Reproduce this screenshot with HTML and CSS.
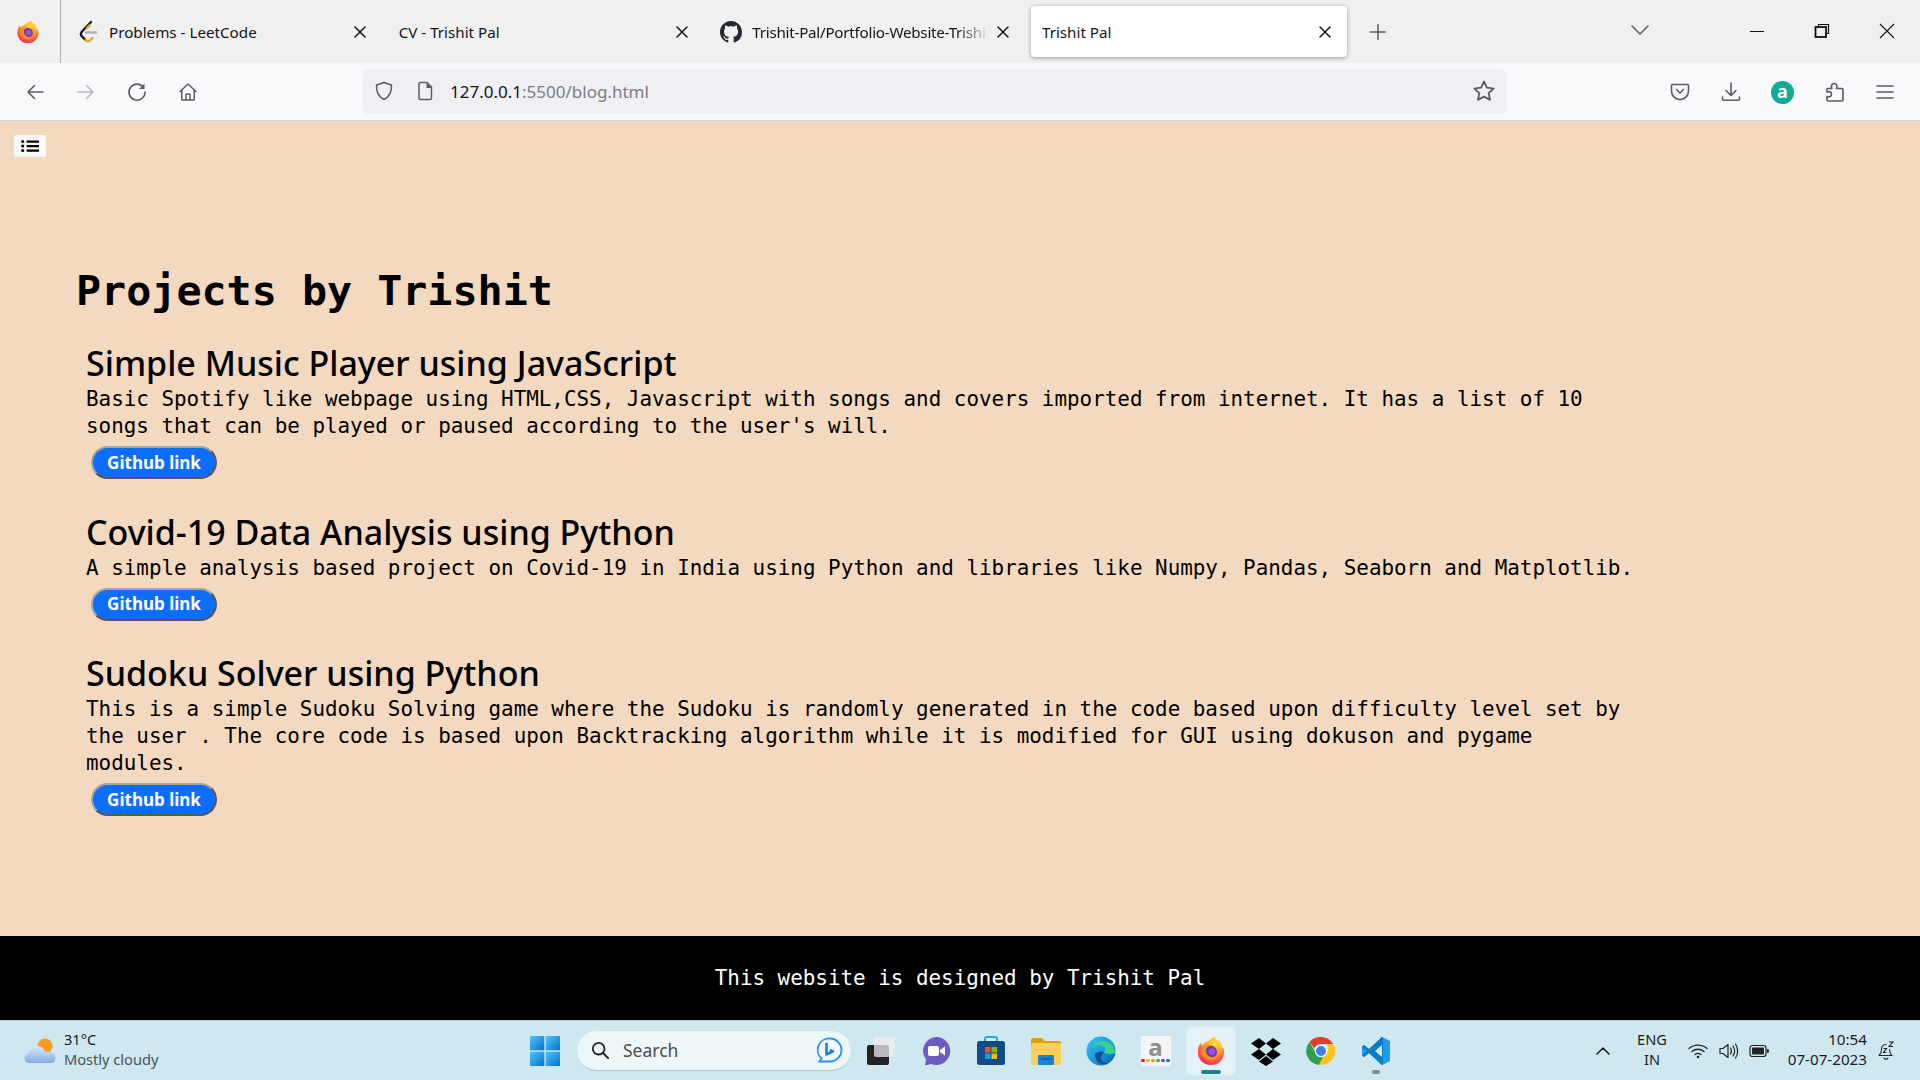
FILE: index.html
```html
<!DOCTYPE html>
<html lang="en">
<head>
<meta charset="utf-8">
<title>Trishit Pal</title>
<link rel="stylesheet" href="styles.css">
</head>
<body>
<svg class="defs" width="0" height="0">
  <defs>
    <radialGradient id="ffBody" cx="0.6" cy="0.25" r="0.9">
      <stop offset="0" stop-color="#ffde3d"/><stop offset="0.4" stop-color="#ff9a26"/><stop offset="0.8" stop-color="#f5384f"/><stop offset="1" stop-color="#e31587"/>
    </radialGradient>
    <linearGradient id="edgeG" x1="0" y1="0" x2="1" y2="1">
      <stop offset="0" stop-color="#35c1f1"/><stop offset="0.5" stop-color="#1b9de2"/><stop offset="1" stop-color="#0c59a4"/>
    </linearGradient>
    <linearGradient id="winG" x1="0" y1="0" x2="1" y2="1">
      <stop offset="0" stop-color="#4fc6f8"/><stop offset="1" stop-color="#0473d0"/>
    </linearGradient>
    <linearGradient id="cloudG" x1="0" y1="0" x2="0" y2="1">
      <stop offset="0" stop-color="#dce9fa"/><stop offset="1" stop-color="#86ade3"/>
    </linearGradient>
    <symbol id="firefox" viewBox="0 0 32 32">
      <path fill="url(#ffBody)" d="M16 31C7.5 31 2 24.500 2 17c0-4 1.300-7.500 3-9.500L6.500 10C8 7.500 10.500 6 13 5.500 15 3.500 18 2 20 1c-.5 2 0 4 2.500 5.500C27 9 30 12.500 30 17c0 8-6 14-14 14z"/>
      <path fill="#ffd23c" d="M20 1c-1 3-1 5 2 7 3 2 5 5 5 8 2-3 1-8-2-11-2 0-4-2-5-4z"/>
      <circle cx="16" cy="17" r="6.500" fill="#6e3bb8"/>
      <circle cx="17" cy="16.500" r="3.500" fill="#a44fd0"/>
      <path fill="#ff8a1f" d="M7 13c2-3 6-4 9-3-3 0-5 2-5.500 4-.5 3 1 7 5.500 8.500 3 .8 6-.5 7.500-3-1 4-5 6.500-9 6-5-.5-9-4-9-9 0-1.500.5-2.800 1.500-3.500z"/>
    </symbol>
    <symbol id="close" viewBox="0 0 16 16"><path d="M3 3l10 10M13 3L3 13" fill="none" stroke="#15141a" stroke-width="1.500" stroke-linecap="round"/></symbol>
  </defs>
</svg>

<div class="window">
  <header class="tabbar">
    <div class="ff-slot"><svg class="i20"><use href="#firefox"/></svg></div>
    <div class="tabs">
      <div class="tab">
        <svg class="fav" viewBox="0 0 20 24"><path d="M13 2L4 11.500c-1.500 1.500-1.500 3.500 0 5l3.500 3.500" fill="none" stroke="#1a1a1a" stroke-width="2.400" stroke-linecap="round"/><path d="M7.500 20c1.500 1.500 3.500 1.500 5 0l2-2M9 8l2.500-2.500" fill="none" stroke="#f8a01c" stroke-width="2.400" stroke-linecap="round"/><path d="M8 12.500h10" stroke="#b3b3b3" stroke-width="2.400" stroke-linecap="round"/></svg>
        <span class="tab-title">Problems - LeetCode</span>
        <svg class="tab-x"><use href="#close"/></svg>
      </div>
      <div class="tab">
        <span class="tab-title tab-title-nofav">CV - Trishit Pal</span>
        <svg class="tab-x"><use href="#close"/></svg>
      </div>
      <div class="tab">
        <svg class="fav" viewBox="0 0 16 16"><path fill="#24292f" d="M8 0C3.580 0 0 3.580 0 8c0 3.540 2.290 6.530 5.470 7.590.4.070.55-.17.55-.38 0-.19-.01-.82-.01-1.490-2.010.37-2.530-.49-2.690-.94-.09-.23-.48-.94-.82-1.130-.28-.15-.68-.52-.01-.53.63-.01 1.080.58 1.230.82.720 1.210 1.870.87 2.330.66.070-.52.280-.87.510-1.070-1.780-.2-3.640-.89-3.640-3.950 0-.87.310-1.590.820-2.150-.08-.2-.36-1.020.08-2.120 0 0 .67-.21 2.200.820.640-.18 1.320-.27 2-.27s1.360.09 2 .27c1.530-1.040 2.200-.82 2.200-.82.440 1.100.160 1.920.080 2.120.510.560.820 1.270.820 2.150 0 3.070-1.870 3.750-3.650 3.950.290.250.540.730.540 1.480 0 1.070-.01 1.930-.01 2.200 0 .21.150.460.550.380A8.010 8.010 0 0 0 16 8c0-4.420-3.580-8-8-8z"/></svg>
        <span class="tab-title tab-title-fade">Trishit-Pal/Portfolio-Website-Trishi</span>
        <svg class="tab-x"><use href="#close"/></svg>
      </div>
      <div class="tab tab-active">
        <span class="tab-title tab-title-nofav">Trishit Pal</span>
        <svg class="tab-x"><use href="#close"/></svg>
      </div>
    </div>
    <svg class="newtab" viewBox="0 0 18 18"><path d="M9 1.500v15M1.500 9h15" stroke="#5b5b66" stroke-width="1.500" stroke-linecap="round"/></svg>
    <svg class="tablist" viewBox="0 0 18 10"><path d="M1 1l8 8 8-8" fill="none" stroke="#5b5b66" stroke-width="1.500" stroke-linecap="round" stroke-linejoin="round"/></svg>
    <div class="winctl">
      <svg class="ctl" viewBox="0 0 16 16"><path d="M1 8.500h14" stroke="#111" stroke-width="1"/></svg>
      <svg class="ctl" viewBox="0 0 16 16"><path d="M4.500 4V1.500h10v9H12" fill="none" stroke="#111" stroke-width="1.200"/><rect x="1.500" y="4" width="10.500" height="10" fill="none" stroke="#111" stroke-width="1.800"/></svg>
      <svg class="ctl" viewBox="0 0 16 16"><path d="M1 1l14 14M15 1L1 15" stroke="#111" stroke-width="1.100"/></svg>
    </div>
  </header>

  <nav class="navbar">
    <div class="nav-left">
      <svg class="nav-i" viewBox="0 0 20 20"><path d="M18 10H3M9.500 3.500L3 10l6.500 6.500" fill="none" stroke="#5b5b66" stroke-width="1.600" stroke-linecap="round" stroke-linejoin="round"/></svg>
      <svg class="nav-i" viewBox="0 0 20 20"><path d="M2 10h15M10.500 3.500L17 10l-6.500 6.500" fill="none" stroke="#b9b9bf" stroke-width="1.600" stroke-linecap="round" stroke-linejoin="round"/></svg>
      <svg class="nav-i" viewBox="0 0 20 20"><path d="M16.500 5.500A8 8 0 1 0 18 10" fill="none" stroke="#5b5b66" stroke-width="1.600" stroke-linecap="round"/><path d="M17.500 1.500v5.500H12z" fill="#5b5b66"/></svg>
      <svg class="nav-i" viewBox="0 0 20 20"><path d="M2 9.500L10 2l8 7.500M3.800 8v9.200c0 .5.300.8.800.8h10.800c.5 0 .8-.3.800-.8V8M8 18v-5c0-.6.400-1 1-1h2c.6 0 1 .4 1 1v5" fill="none" stroke="#5b5b66" stroke-width="1.500" stroke-linecap="round" stroke-linejoin="round"/></svg>
    </div>
    <div class="urlbar">
      <svg class="url-i" viewBox="0 0 20 20"><path d="M10 1.500l7.500 2.500c.3 6.500-1.500 11.500-7.500 14.500C4 15.500 2.200 10.500 2.500 4z" fill="none" stroke="#5b5b66" stroke-width="1.500" stroke-linejoin="round"/></svg>
      <svg class="url-i url-doc" viewBox="0 0 20 20"><path d="M4 3c0-.8.600-1.500 1.500-1.500H12L16.500 6v11c0 .8-.6 1.500-1.500 1.500H5.500C4.600 18.500 4 17.800 4 17z" fill="none" stroke="#5b5b66" stroke-width="1.500" stroke-linejoin="round"/><path d="M11.500 1.500V7h5z" fill="#5b5b66"/></svg>
      <span class="url-text">127.0.0.1<span class="url-dim">:5500/blog.html</span></span>
      <svg class="url-i url-star" viewBox="0 0 24 24"><path d="M12 2.500l2.900 6.200 6.700.9-4.900 4.600 1.300 6.700-6-3.300-6 3.300 1.300-6.700-4.900-4.600 6.700-.9z" fill="none" stroke="#5b5b66" stroke-width="1.800" stroke-linejoin="round"/></svg>
    </div>
    <div class="nav-right">
      <svg class="nav-i" viewBox="0 0 20 20"><path d="M2.500 2.500h15c.6 0 1 .4 1 1V9c0 5-4 8.500-8.500 8.500S1.500 14 1.500 9V3.500c0-.6.400-1 1-1z" fill="none" stroke="#5b5b66" stroke-width="1.600"/><path d="M6.500 7.500L10 11l3.500-3.500" fill="none" stroke="#5b5b66" stroke-width="1.600" stroke-linecap="round" stroke-linejoin="round"/></svg>
      <svg class="nav-i" viewBox="0 0 20 20"><path d="M10 1v12M5 8.500l5 5 5-5M1.500 15v2c0 .8.500 1.200 1.200 1.200h14.600c.7 0 1.200-.4 1.200-1.200v-2" fill="none" stroke="#5b5b66" stroke-width="1.600" stroke-linecap="round" stroke-linejoin="round"/></svg>
      <span class="ext-a">a</span>
      <svg class="nav-i" viewBox="0 0 20 20"><path d="M2.500 6.500H7c-1.500-3 0-5 2.200-5S12.800 3.500 11.500 6.500H17c.6 0 1 .4 1 1V18c0 .6-.4 1-1 1H3c-.6 0-1-.4-1-1v-3.500c3 1 4.500-.5 4.500-2.300S5 9 2 10V7z" fill="none" stroke="#5b5b66" stroke-width="1.600" stroke-linejoin="round"/></svg>
      <svg class="nav-i" viewBox="0 0 20 20"><path d="M2 4h16M2 10h16M2 16h16" stroke="#5b5b66" stroke-width="1.600" stroke-linecap="round"/></svg>
    </div>
  </nav>

  <main class="page">
    <div class="page-body">
      <button class="menu-btn" type="button" aria-label="menu">
        <svg class="menu-i" viewBox="0 0 16 12"><path d="M5 2h11M5 6h11M5 10h11" stroke="#000" stroke-width="2"/><circle cx="1.500" cy="2" r="1.400"/><circle cx="1.500" cy="6" r="1.400"/><circle cx="1.500" cy="10" r="1.400"/></svg>
      </button>
      <section class="projects">
        <h1>Projects by Trishit</h1>
        <article class="project">
          <h2>Simple Music Player using JavaScript</h2>
          <p>Basic Spotify like webpage using HTML,CSS, Javascript with songs and covers imported from internet. It has a list of 10 songs that can be played or paused according to the user's will.</p>
          <button class="gh-btn" type="button">Github link</button>
        </article>
        <article class="project">
          <h2>Covid-19 Data Analysis using Python</h2>
          <p>A simple analysis based project on Covid-19 in India using Python and libraries like Numpy, Pandas, Seaborn and Matplotlib.</p>
          <button class="gh-btn" type="button">Github link</button>
        </article>
        <article class="project">
          <h2>Sudoku Solver using Python</h2>
          <p>This is a simple Sudoku Solving game where the Sudoku is randomly generated in the code based upon difficulty level set by the user . The core code is based upon Backtracking algorithm while it is modified for GUI using dokuson and pygame modules.</p>
          <button class="gh-btn" type="button">Github link</button>
        </article>
      </section>
    </div>
    <footer class="site-footer">This website is designed by Trishit Pal</footer>
  </main>

  <div class="taskbar">
    <div class="weather">
      <svg class="weather-i" viewBox="0 0 32 28"><circle cx="21" cy="9" r="7.500" fill="#f79a1e"/><path d="M6 26c-3.500 0-5.500-2-5.500-5 0-2.500 2-4.600 4.500-5C6 12 9.500 9 13 9c4 0 7 2.500 8 6 1-.5 2-.5 3-.3 4 .3 7.500 2.500 7.500 6.500 0 3-2 4.800-5 4.800z" fill="url(#cloudG)"/></svg>
      <div class="weather-text"><span class="w-temp">31°C</span><span class="w-desc">Mostly cloudy</span></div>
    </div>
    <div class="task-center">
      <svg class="win" viewBox="0 0 30 30"><rect x="0" y="0" width="14.300" height="14.300" fill="url(#winG)"/><rect x="15.700" y="0" width="14.300" height="14.300" fill="url(#winG)"/><rect x="0" y="15.700" width="14.300" height="14.300" fill="url(#winG)"/><rect x="15.700" y="15.700" width="14.300" height="14.300" fill="url(#winG)"/></svg>
      <div class="search">
        <svg class="search-i" viewBox="0 0 20 20"><circle cx="8.500" cy="8.500" r="6.500" fill="none" stroke="#1f1f1f" stroke-width="2"/><path d="M13.500 13.500L19 19" stroke="#1f1f1f" stroke-width="2.200" stroke-linecap="round"/></svg>
        <span class="search-t">Search</span>
        <svg class="bing" viewBox="0 0 26 26"><path d="M13 1.500a11.500 11.500 0 0 1 0 23H2.500l2-3A11.500 11.500 0 0 1 13 1.500z" fill="#f1f8fb" stroke="#2a8fe8" stroke-width="1.800"/><path d="M9.500 6v11.500l6.500-3.200-3-1.500" fill="none" stroke="#1f7fe0" stroke-width="2.600" stroke-linejoin="round"/></svg>
      </div>
      <div class="apps">
        <div class="app"><svg class="app-i" viewBox="0 0 30 30"><rect x="1" y="9" width="22" height="20" rx="2" fill="#222"/><rect x="8" y="1" width="21" height="20" rx="2" fill="#eeeeee" fill-opacity=".75"/></svg></div>
        <div class="app"><svg class="app-i" viewBox="0 0 30 30"><path d="M15 1a14 14 0 1 1-5 27l-6 1.500 1-6A14 14 0 0 1 15 1z" fill="#6b5cc4"/><rect x="7" y="10" width="11" height="10" rx="2" fill="#fff"/><path d="M19 14l5-3.500v9L19 16z" fill="#fff"/></svg></div>
        <div class="app"><svg class="app-i" viewBox="0 0 30 30"><path d="M9 6V3c0-1 .8-2 2-2h8c1.200 0 2 1 2 2v3" fill="none" stroke="#2aa8e8" stroke-width="2"/><rect x="1" y="5" width="28" height="24" rx="2.500" fill="#144b86"/><rect x="9" y="11" width="5.500" height="5.500" fill="#f25022"/><rect x="15.500" y="11" width="5.500" height="5.500" fill="#7fba00"/><rect x="9" y="17.500" width="5.500" height="5.500" fill="#00a4ef"/><rect x="15.500" y="17.500" width="5.500" height="5.500" fill="#ffb900"/></svg></div>
        <div class="app"><svg class="app-i" viewBox="0 0 30 30"><path d="M0 4c0-1 .8-2 2-2h9l3 3h14c1 0 2 1 2 2v3H0z" fill="#d8a106"/><rect x="0" y="7" width="30" height="22" rx="1.500" fill="#fcd058"/><rect x="7" y="19" width="16" height="10" rx="1" fill="#1585d8"/><rect x="10" y="22" width="10" height="1.800" fill="#0b5fa6"/></svg></div>
        <div class="app"><svg class="app-i" viewBox="0 0 30 30"><circle cx="15" cy="15" r="14.500" fill="url(#edgeG)"/><path d="M29 17c0-8-6-12-12-12C11 5 7 8 6 12c2-3 6-4 9-3 3 1 4 3 4 5 0 1-.5 2-1 2.500 3 2 8 2 11 .5z" fill="#38d28c"/><path d="M9 19c0 5 4 9 9 9 2 0 3-.3 4-1-4 .5-7-2-7-5 0-3 2-4 3-5.500-2-2-9-1-9 2.500z" fill="#0c4f96"/></svg></div>
        <div class="app"><div class="amz"><span class="amz-a">a</span><div class="amz-dots"><i class="dot d1"></i><i class="dot d2"></i><i class="dot d3"></i><i class="dot d4"></i><i class="dot d5"></i><i class="dot d6"></i></div></div></div>
        <div class="app app-active"><svg class="app-i"><use href="#firefox"/></svg><i class="run-on"></i></div>
        <div class="app"><svg class="app-i" viewBox="0 0 30 30"><path d="M8 2L0 7.500 8 13l7-5.500zM22 2l-7 5.500 7 5.500 8-5.500zM0 18.500L8 24l7-5.500L8 13zM22 13l-7 5.500L22 24l8-5.500zM8 25.500L15 30l7-4.500-7-5.500z" fill="#000"/></svg></div>
        <div class="app"><svg class="app-i" viewBox="0 0 30 30"><path d="M15 1a14 14 0 0 1 12.100 7H15a7 7 0 0 0-6.600 4.600L3.500 6A14 14 0 0 1 15 1z" fill="#e33b2e"/><path d="M3.500 6l6 10.500a7 7 0 0 0 8.500 3.200L13 28.900A14 14 0 0 1 3.500 6z" fill="#2fa04c"/><path d="M27.100 8A14 14 0 0 1 13 28.900l6-10.300A7 7 0 0 0 20.500 8z" fill="#fcc41c"/><circle cx="15" cy="15" r="6.200" fill="#fff"/><circle cx="15" cy="15" r="5" fill="#3f7de8"/></svg></div>
        <div class="app"><svg class="app-i" viewBox="0 0 30 30"><path d="M21 1l8 4v20l-8 4-13-12-5 4-2-1.500V10.500L3 9l5 4zM21 9l-7 6 7 6z" fill="#1f9cf0" fill-rule="evenodd"/><path d="M21 1L8 13 3 9 1 10.500 6 15l-5 4.500L3 21l5-4L21 29l1-.5V1.500z" fill="#0a7cc4"/><path d="M21 9l-7 6 7 6z" fill="#cfe7ee"/></svg><i class="run-off"></i></div>
      </div>
    </div>
    <div class="tray">
      <svg class="t-chev" viewBox="0 0 14 8"><path d="M1 7l6-6 6 6" fill="none" stroke="#1a1a1a" stroke-width="1.500" stroke-linecap="round" stroke-linejoin="round"/></svg>
      <div class="lang"><span>ENG</span><span>IN</span></div>
      <svg class="t-i t-wifi" viewBox="0 0 20 16"><path d="M1 5.500c5-4.500 13-4.500 18 0M4 8.500c3.500-3 8.500-3 12 0M7 11.500c1.800-1.400 4.200-1.400 6 0" fill="none" stroke="#222" stroke-width="1.300" stroke-linecap="round"/><circle cx="10" cy="14" r="1.300" fill="#222"/></svg>
      <svg class="t-i t-vol" viewBox="0 0 20 16"><path d="M1 5.500h3L9 1.500v13l-5-4H1z" fill="none" stroke="#222" stroke-width="1.200" stroke-linejoin="round"/><path d="M11.500 5c1.200 1.800 1.200 4.200 0 6M14 3c2 3 2 7 0 10M16.500 1c2.800 4 2.800 10 0 14" fill="none" stroke="#222" stroke-width="1.200" stroke-linecap="round"/></svg>
      <svg class="t-i t-bat" viewBox="0 0 20 14"><rect x="1" y="1.500" width="16" height="11" rx="2.500" fill="none" stroke="#222" stroke-width="1.200"/><rect x="3" y="3.500" width="12" height="7" rx="1" fill="#222"/><rect x="18" y="5" width="1.800" height="4" rx="1" fill="#222"/></svg>
      <div class="clock"><span>10:54</span><span>07-07-2023</span></div>
      <svg class="t-i t-bell" viewBox="0 0 18 20"><path d="M9 3.500c-3 0-4.500 2-4.500 5 0 3-1 4.500-2.500 6h13c-1.500-1.500-2.500-3-2.500-6M7 17c.5 1.500 3.500 1.500 4 0" fill="none" stroke="#222" stroke-width="1.100" stroke-linecap="round" stroke-linejoin="round"/><path d="M6.500 7.500h3l-3 4h3M12 1h4l-4 4.500h4" fill="none" stroke="#222" stroke-width="1.100"/></svg>
    </div>
  </div>
</div>
</body>
</html>
```

FILE: styles.css
```css
* { box-sizing: border-box; }
html, body { margin: 0; padding: 0; }
body { width: 1920px; height: 1080px; overflow: hidden; font-family: "Noto Sans", sans-serif; }
.defs { position: absolute; }
.window { display: flex; flex-direction: column; width: 1920px; height: 1080px; }
i { display: block; }

/* tab strip */
.tabbar { display: flex; align-items: center; height: 63px; flex: none; background: #f0f0f0; }
.ff-slot { display: flex; align-items: center; justify-content: center; width: 61px; height: 63px; padding-right: 4px; border-right: 1px solid #a9a9ad; flex: none; }
.i20 { width: 24px; height: 24px; }
.tabs { display: flex; gap: 5.670px; margin-left: 5px; flex: none; }
.tab { display: flex; align-items: center; width: 316px; height: 51px; padding: 0 14px 0 11px; border-radius: 4px; flex: none; }
.tab-active { background: #fff; box-shadow: 0 1px 4px rgba(0,0,0,.35); }
.fav { width: 22px; height: 24px; margin-right: 10px; flex: none; }
.tab-title { flex: 1; min-width: 0; font-size: 15.200px; color: #15141a; white-space: nowrap; overflow: hidden; }
.tab-title-fade { letter-spacing: -.25px; -webkit-mask-image: linear-gradient(90deg, #000 86%, transparent 100%); mask-image: linear-gradient(90deg, #000 86%, transparent 100%); }
.tab-x { width: 16px; height: 16px; margin-left: 5px; flex: none; }
.newtab { width: 18px; height: 18px; margin-left: 22px; flex: none; }
.tablist { width: 18px; height: 10px; margin-left: 244px; margin-bottom: 3px; flex: none; }
.winctl { display: flex; align-items: center; gap: 49px; margin-left: 100px; margin-bottom: 2px; }
.ctl { width: 16px; height: 16px; flex: none; }

/* toolbar */
.navbar { display: flex; align-items: center; height: 58px; flex: none; background: #f9f9fb; border-bottom: 1px solid #cfcfd8; padding: 0 0 1px 25px; }
.nav-i { width: 20px; height: 20px; flex: none; }
.nav-left { display: flex; align-items: center; gap: 31px; width: 337px; margin-top: 2px; flex: none; }
.urlbar { display: flex; align-items: center; width: 1144px; height: 45px; background: #f0f0f4; border-radius: 6px; padding: 0 10px 0 12px; flex: none; }
.url-i { width: 20px; height: 20px; flex: none; }
.url-doc { margin-left: 21px; }
.url-text { margin-left: 15px; flex: 1; font-size: 17px; color: #15141a; }
.url-dim { color: #7c7c84; }
.url-star { width: 24px; height: 24px; }
.nav-right { display: flex; align-items: center; gap: 30.500px; margin: 2px 0 0 164px; flex: none; }
.ext-a { display: flex; align-items: center; justify-content: center; width: 23px; height: 23px; border-radius: 50%; background: #0fab96; color: #fff; font: 700 18px/20px "Noto Sans", sans-serif; padding-bottom: 3px; flex: none; }

/* page */
.page { display: flex; flex-direction: column; flex: 1; min-height: 0; background: #f2d9bf; }
.page-body { flex: 1; padding: 14px 0 0 14px; }
.menu-btn { display: flex; align-items: center; justify-content: center; width: 32px; height: 22px; padding: 0; background: #f8f9fa; border: 0; border-radius: 2px; }
.menu-i { width: 18px; height: 14px; }
.projects { margin: 109px 0 0 62px; }
h1 { margin: 0 0 27px; font: 700 41.700px/50px "DejaVu Sans Mono", monospace; color: #000; }
.project { width: 1552px; margin: 0 0 32.500px 10px; }
h2 { margin: 0; padding-bottom: 2px; font: 500 34px/41px "Noto Sans", sans-serif; color: #000; }
p { margin: 0; font: 400 20.900px/27px "DejaVu Sans Mono", monospace; color: #000; }
.gh-btn { display: block; width: 126px; height: 33px; margin: 6px 0 0 5px; padding: 0; background: #0d6efd; color: #fff; font: 700 17px/20px "Noto Sans", sans-serif; border-width: 2px; border-style: solid; border-color: #a8a49f #5d5550 #5d5550 #a8a49f; border-radius: 17px; }
.site-footer { display: flex; align-items: center; justify-content: center; height: 84px; flex: none; background: #000; color: #fff; font: 400 20.900px/27px "DejaVu Sans Mono", monospace; }

/* taskbar */
.taskbar { display: flex; align-items: center; height: 60px; flex: none; background: #cfe7ee; border-top: 1px solid #b6c9cf; }
.weather { display: flex; align-items: center; width: 530px; padding-left: 24px; flex: none; color: #1c1c1c; }
.weather-i { width: 32px; height: 28px; margin-right: 8px; flex: none; }
.weather-text { display: flex; flex-direction: column; margin-bottom: 3px; font-size: 14.600px; line-height: 20px; }
.w-desc { color: #4a5358; }
.task-center { display: flex; align-items: center; flex: none; }
.win { width: 30px; height: 30px; flex: none; }
.search { display: flex; align-items: center; width: 274px; height: 40px; margin-left: 17px; padding: 0 8px 0 14px; background: #edf6f9; border-radius: 20px; border-bottom: 1px solid #b4c6cc; flex: none; }
.search-i { width: 18px; height: 18px; flex: none; }
.search-t { margin-left: 14px; flex: 1; font-size: 17.500px; color: #4d4d4d; }
.bing { width: 26px; height: 26px; flex: none; }
.apps { display: flex; align-items: center; gap: 7px; margin-left: 5.500px; flex: none; }
.app { position: relative; display: flex; align-items: center; justify-content: center; width: 48px; height: 48px; flex: none; }
.app-i { width: 30px; height: 30px; flex: none; }
.app-active { background: #e4f1f6; border-radius: 5px; box-shadow: 0 0 0 1px #d9e9ee; }
.run-on { position: absolute; bottom: 1px; left: 14px; width: 20px; height: 4px; border-radius: 2px; background: #1e7f96; }
.run-off { position: absolute; bottom: 1px; left: 20px; width: 8px; height: 4px; border-radius: 2px; background: #7f8a8f; }
.amz { display: flex; flex-direction: column; align-items: center; width: 30px; height: 30px; background: #f4f4f4; }
.amz-a { font: 700 24px/22px "Noto Sans", sans-serif; color: #8d8d8d; }
.amz-dots { display: flex; gap: 1.500px; margin-top: 1px; }
.dot { width: 3.500px; height: 3.500px; border-radius: 50%; }
.d1 { background: #e81123; } .d2 { background: #ffb900; } .d3 { background: #f7931e; } .d4 { background: #3fae49; } .d5 { background: #8e44ad; } .d6 { background: #0078d7; }
.tray { display: flex; align-items: center; margin-left: 196.500px; flex: none; color: #1c1c1c; font-size: 14.600px; line-height: 20px; }
.t-chev { width: 14px; height: 8px; flex: none; }
.lang { display: flex; flex-direction: column; align-items: center; width: 40px; margin-left: 22px; margin-bottom: 3px; }
.t-i { flex: none; }
.t-wifi { width: 20px; height: 16px; margin-left: 16px; }
.t-vol { width: 20px; height: 16px; margin-left: 11px; }
.t-bat { width: 20px; height: 14px; margin-left: 10px; }
.clock { display: flex; flex-direction: column; align-items: flex-end; width: 90px; margin-left: 8px; margin-bottom: 3px; font-size: 15.200px; }
.t-bell { width: 18px; height: 20px; margin-left: 10px; }
```
